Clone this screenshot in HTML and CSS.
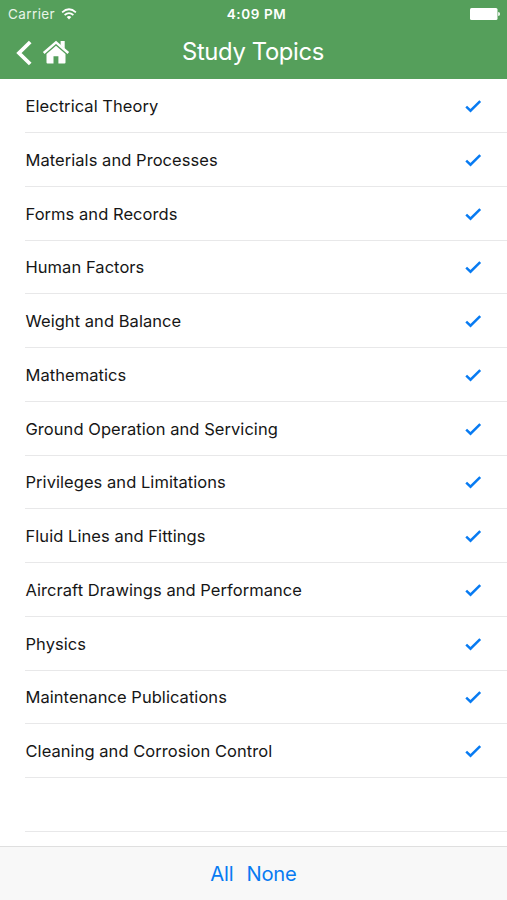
FILE: index.html
```
<!DOCTYPE html>
<html lang="en">
<head>
<meta charset="utf-8">
<title>Study Topics</title>
<link rel="stylesheet" href="styles.css">
</head>
<body>
<svg class="defs" aria-hidden="true"><symbol id="check" viewBox="0 0 18 16"><path d="M2.2 8.7 6.5 12.7 16.2 3.2" fill="none" stroke="#087bf2" stroke-width="2.5"/></symbol></svg>
<div class="screen">
  <header class="header">
    <div class="status">
      <div class="carrier"><span>Carrier</span>
        <svg class="wifi" viewBox="0 0 16 12"><g fill="none" stroke="#fff" stroke-width="1.7"><path d="M1.1 4.3Q8-1.8 14.9 4.3"/><path d="M3.6 7Q8 3.2 12.4 7"/></g><path d="M5.7 9Q8 7.1 10.3 9L8 11.5Z" fill="#fff"/></svg>
      </div>
      <span class="time">4:09 PM</span>
      <svg class="battery" viewBox="0 0 31 12"><rect x="0" y="0" width="27.5" height="12" rx="1.5" fill="#fff"/><path d="M28.2 4Q30 4.2 30 6T28.2 8Z" fill="#fff"/></svg>
    </div>
    <div class="nav">
      <div class="actions">
        <svg class="back" viewBox="0 0 18 26"><path d="M15.2 2 4 13 15.2 24" fill="none" stroke="#fff" stroke-width="3.8"/></svg>
        <svg class="home" viewBox="0 0 28 24"><path d="M1.7 13 14 2.3 26.3 13" fill="none" stroke="#fff" stroke-width="2.5"/><path d="M18.6 1H22.7V8.7L18.6 5.2Z" fill="#fff"/><path d="M14 5.8 4.5 14V22.5Q4.5 23.5 5.5 23.5H11.5V16.3H16.4V23.5H22.5Q23.5 23.5 23.5 22.5V14Z" fill="#fff"/></svg>
      </div>
      <h1>Study Topics</h1>
      <span></span>
    </div>
  </header>
  <ul class="topics">
    <li><span>Electrical Theory</span><svg><use href="#check"/></svg></li>
    <li><span>Materials and Processes</span><svg><use href="#check"/></svg></li>
    <li><span>Forms and Records</span><svg><use href="#check"/></svg></li>
    <li><span>Human Factors</span><svg><use href="#check"/></svg></li>
    <li><span>Weight and Balance</span><svg><use href="#check"/></svg></li>
    <li><span>Mathematics</span><svg><use href="#check"/></svg></li>
    <li><span>Ground Operation and Servicing</span><svg><use href="#check"/></svg></li>
    <li><span>Privileges and Limitations</span><svg><use href="#check"/></svg></li>
    <li><span>Fluid Lines and Fittings</span><svg><use href="#check"/></svg></li>
    <li><span>Aircraft Drawings and Performance</span><svg><use href="#check"/></svg></li>
    <li><span>Physics</span><svg><use href="#check"/></svg></li>
    <li><span>Maintenance Publications</span><svg><use href="#check"/></svg></li>
    <li><span>Cleaning and Corrosion Control</span><svg><use href="#check"/></svg></li>
    <li></li>
  </ul>
  <footer class="toolbar"><span>All</span><span>None</span></footer>
</div>
</body>
</html>
```
FILE: styles.css
```
* { box-sizing: border-box; }
body { margin: 0; background: #fff; font-family: Inter, "Liberation Sans", sans-serif; }
.defs { display: block; width: 0; height: 0; }
.screen { display: flex; flex-direction: column; width: 507px; height: 900px; overflow: hidden; }
.header { flex: none; height: 79px; background: #559f5b; color: #fff; }
.status { display: grid; grid-template-columns: 1fr auto 1fr; align-items: center; height: 27px; padding: 0 6px 0 8px; font-size: 13.5px; }
.carrier { display: flex; align-items: center; gap: 6px; color: #e8f5e8; letter-spacing: .4px; }
.wifi { width: 16px; height: 12px; }
.time { padding-left: 4px; font-weight: 600; font-size: 13.5px; letter-spacing: .6px; }
.battery { justify-self: end; width: 31px; height: 12px; }
.nav { display: grid; grid-template-columns: 1fr auto 1fr; align-items: center; height: 49px; padding: 0 16px 0 15px; }
.actions { display: flex; align-items: center; gap: 9px; }
.back { width: 18px; height: 26px; margin-top: 2px; }
.home { width: 28px; height: 24px; }
h1 { margin: 0; font-size: 23.8px; font-weight: 400; line-height: 28px; letter-spacing: -.35px; }
.topics { flex: 1; min-height: 0; overflow: hidden; margin: 0; padding: .4px 0 0 25px; list-style: none; }
.topics li { display: flex; align-items: center; justify-content: space-between; height: 53.75px; padding: .6px 25px 0 .5px; border-bottom: 1px solid #e8e8e9; font-size: 16.5px; letter-spacing: .05px; color: #161616; }
.topics svg { width: 18px; height: 16px; }
.toolbar { flex: none; display: flex; justify-content: center; align-items: center; gap: 13px; height: 54px; background: #f8f8f8; border-top: 1px solid #dfdfdf; color: #087bf2; font-size: 20.2px; letter-spacing: -.2px; }
```
